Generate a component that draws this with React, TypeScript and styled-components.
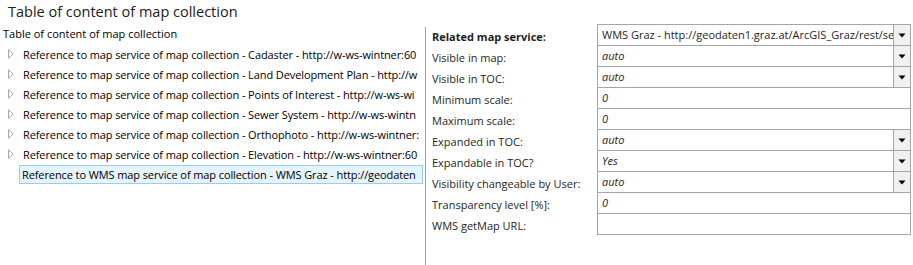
import * as React from "react";
import styled, { createGlobalStyle } from "styled-components";

const GlobalStyle = createGlobalStyle`
  body {
    margin: 0;
    background: #ffffff;
    font-family: "Open Sans", "Liberation Sans", sans-serif;
    color: #000000;
  }
`;

const Page = styled.div`
  width: 913px;
  height: 265px;
  overflow: hidden;
  display: flex;
  flex-direction: column;
`;

const Title = styled.div`
  height: 24px;
  line-height: 24px;
  padding-left: 8px;
  font-size: 14.5px;
  color: #1a1a1a;
  white-space: nowrap;
`;

const Main = styled.div`
  flex: 1;
  display: flex;
`;

const TreePane = styled.div`
  width: 425px;
  flex-shrink: 0;
  overflow: hidden;
`;

const PaneCaption = styled.div`
  height: 20px;
  line-height: 20px;
  padding-left: 3px;
  font-size: 11px;
`;

const TreeRow = styled.div`
  height: 20px;
  display: flex;
  align-items: center;
  padding-left: 8px;
  font-size: 11px;
  letter-spacing: -0.1px;
  white-space: nowrap;
  overflow: hidden;
  width: 423px;
  box-sizing: border-box;
`;

const Expander = styled.span`
  width: 14px;
  flex-shrink: 0;
  display: flex;
  align-items: center;
`;

const NodeLabel = styled.span<{ $selected?: boolean }>`
  display: block;
  overflow: hidden;
  flex: 1;
  height: 19px;
  line-height: 17px;
  box-sizing: border-box;
  margin-left: ${(p) => (p.$selected ? "-3px" : "0")};
  padding-left: ${(p) => (p.$selected ? "2px" : "0")};
  border: 1px solid ${(p) => (p.$selected ? "#99cdf0" : "transparent")};
  background: ${(p) => (p.$selected ? "#e5f3fb" : "transparent")};
`;

const Divider = styled.div`
  width: 1px;
  margin-top: 3px;
  background: #a0a0a0;
  flex-shrink: 0;
`;

const FormPane = styled.div`
  flex: 1;
  padding: 0 2px 0 6px;
  display: grid;
  grid-template-columns: 165px 1fr;
  grid-auto-rows: 21px;
  align-content: start;
`;

const Label = styled.div<{ $bold?: boolean }>`
  font-size: 11px;
  line-height: 21px;
  padding-top: 2px;
  font-weight: ${(p) => (p.$bold ? 700 : 400)};
  color: #1e1e1e;
  white-space: nowrap;
`;

const Field = styled.div`
  height: 22px;
  box-sizing: border-box;
  border: 1px solid #a5a5a5;
  display: flex;
  align-items: stretch;
  background: #ffffff;
  overflow: hidden;
`;

const Value = styled.div<{ $italic?: boolean }>`
  flex: 1;
  padding-left: 4px;
  font-size: 11px;
  line-height: 20px;
  font-style: ${(p) => (p.$italic ? "italic" : "normal")};
  color: #1e1e1e;
  white-space: nowrap;
  overflow: hidden;
`;

const DropButton = styled.div`
  width: 16px;
  flex-shrink: 0;
  border-left: 1px solid #a5a5a5;
  background: #f0f0f0;
  display: flex;
  align-items: center;
  justify-content: center;
`;

const treeItems = [
  "Reference to map service of map collection - Cadaster - http://w-ws-wintner:60",
  "Reference to map service of map collection - Land Development Plan - http://w",
  "Reference to map service of map collection - Points of Interest - http://w-ws-wi",
  "Reference to map service of map collection - Sewer System - http://w-ws-wintn",
  "Reference to map service of map collection - Orthophoto - http://w-ws-wintner:",
  "Reference to map service of map collection - Elevation - http://w-ws-wintner:60",
];

type Row = { label: string; value: string; bold?: boolean; italic?: boolean; select?: boolean };

const rows: Row[] = [
  { label: "Related map service:", value: "WMS Graz - http://geodaten1.graz.at/ArcGIS_Graz/rest/se", bold: true, select: true },
  { label: "Visible in map:", value: "auto", italic: true, select: true },
  { label: "Visible in TOC:", value: "auto", italic: true, select: true },
  { label: "Minimum scale:", value: "0", italic: true },
  { label: "Maximum scale:", value: "0", italic: true },
  { label: "Expanded in TOC:", value: "auto", italic: true, select: true },
  { label: "Expandable in TOC?", value: "Yes", italic: true, select: true },
  { label: "Visibility changeable by User:", value: "auto", italic: true, select: true },
  { label: "Transparency level [%]:", value: "0", italic: true },
  { label: "WMS getMap URL:", value: "" },
];

function ExpandArrow() {
  return (
    <svg width="6" height="10" viewBox="0 0 6 10">
      <path d="M0.5 0.8 L5.2 5 L0.5 9.2 Z" fill="#ffffff" stroke="#a6a6a6" strokeWidth="1" />
    </svg>
  );
}

function DownArrow() {
  return (
    <svg width="8" height="5" viewBox="0 0 8 5">
      <path d="M0.5 0.5 L7.5 0.5 L4 4.5 Z" fill="#000000" />
    </svg>
  );
}

export default function App() {
  return (
    <Page>
      <GlobalStyle />
      <Title>Table of content of map collection</Title>
      <Main>
        <TreePane>
          <PaneCaption>Table of content of map collection</PaneCaption>
          {treeItems.map((t) => (
            <TreeRow key={t}>
              <Expander>
                <ExpandArrow />
              </Expander>
              <NodeLabel>{t}</NodeLabel>
            </TreeRow>
          ))}
          <TreeRow>
            <Expander />
            <NodeLabel $selected>
              Reference to WMS map service of map collection - WMS Graz - http://geodaten
            </NodeLabel>
          </TreeRow>
        </TreePane>
        <Divider />
        <FormPane>
          {rows.map((r) => (
            <React.Fragment key={r.label}>
              <Label $bold={r.bold}>{r.label}</Label>
              <Field>
                <Value $italic={r.italic}>{r.value}</Value>
                {r.select && (
                  <DropButton>
                    <DownArrow />
                  </DropButton>
                )}
              </Field>
            </React.Fragment>
          ))}
        </FormPane>
      </Main>
    </Page>
  );
}
